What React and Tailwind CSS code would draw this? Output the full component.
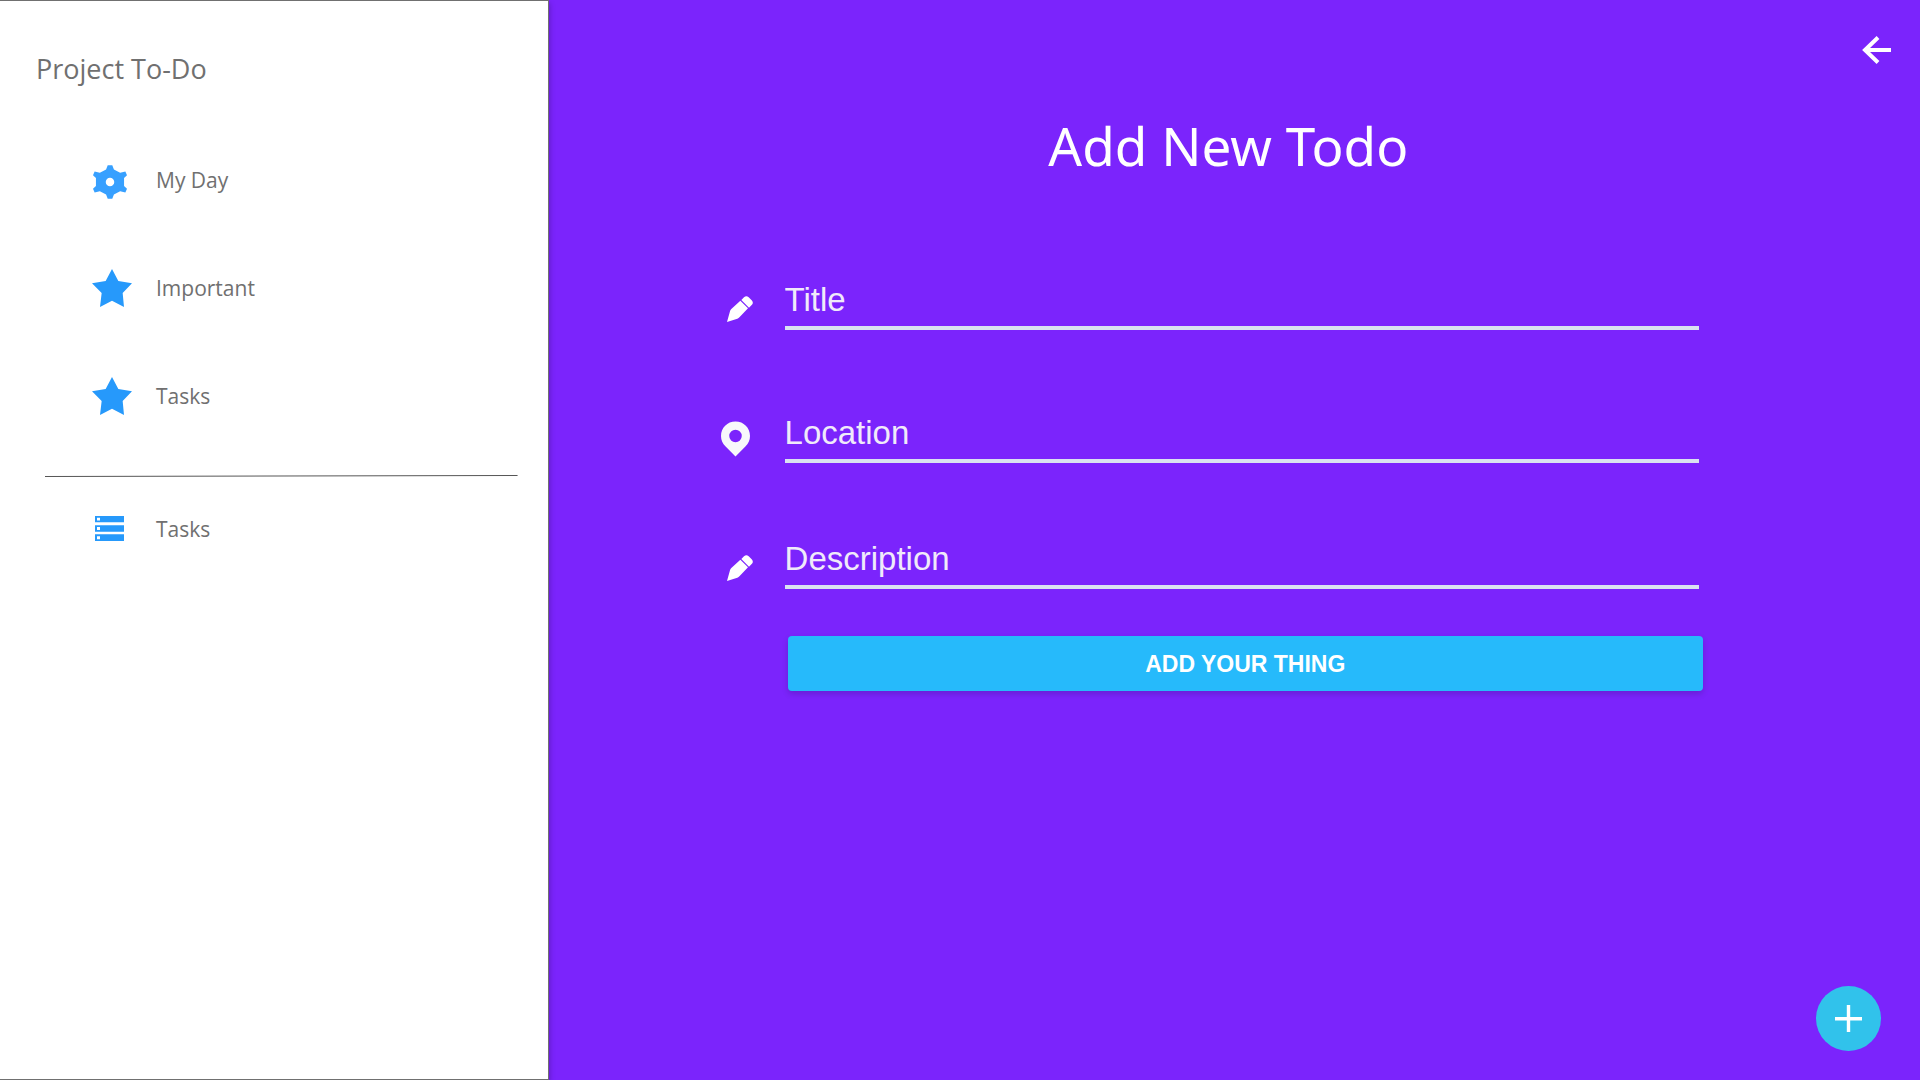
import React from "react";

const GearIcon = () => (
  <svg className="h-[34px] w-[34px]" viewBox="38 75 104 102" fill="#37a0ff" aria-hidden="true">
    <path
      fillRule="evenodd"
      d="M83 75H97L102 88L121 98L137 94L142 105L133 114V138L142 147L137 158L121 154L102 164L97 177H83L78 164L59 154L43 158L38 147L47 138V114L38 105L43 94L59 98L78 88ZM90 113A13 13 0 1 0 90 139A13 13 0 1 0 90 113Z"
    />
  </svg>
);

const StarIcon = () => (
  <svg className="h-[38px] w-10" viewBox="0 0 120 114" fill="#2699fb" aria-hidden="true">
    <path d="M60 0L79 36L120 43L92 72L96 114L60 95L24 114L29 72L0 43L41 36Z" />
  </svg>
);

const ListIcon = () => (
  <svg className="h-[26px] w-[29px]" viewBox="0 0 29 26" fill="#2699fb" aria-hidden="true">
    <path
      fillRule="evenodd"
      d="M0 0H29V6.3H0ZM2 1.7V4.6H5V1.7ZM0 9.2H29V15.8H0ZM2 11V14H5V11ZM0 18.3H29V25H0ZM2 20.2V23.2H5V20.2Z"
    />
  </svg>
);

const PencilIcon = () => (
  <svg className="h-[26px] w-[26px]" viewBox="0 0 78 78" fill="#fff" aria-hidden="true">
    <path d="M0 78L9 46Q10 42 13 39L40 14L63 37L38 63Q35 66 31 68ZM43 12L51 4Q58 -3 65 4L74 13Q81 20 74 27L66 35Z" />
  </svg>
);

const PinIcon = () => (
  <svg className="h-9 w-[29px]" viewBox="0 0 88 106" fill="#f8f8fb" aria-hidden="true">
    <path
      fillRule="evenodd"
      d="M44 0C19 0 0 19 0 44C0 57 5 67 14 76L44 106L74 76C83 67 88 57 88 44C88 19 69 0 44 0ZM44 25A19 19 0 1 1 44 63A19 19 0 1 1 44 25Z"
    />
  </svg>
);

const NavItem = ({ icon, label }) => (
  <li>
    <a href="#" className="flex h-9 items-center text-[21px] leading-9">
      <span className="flex w-16 shrink-0 items-center">{icon}</span>
      {label}
    </a>
  </li>
);

const Field = ({ id, label, icon }) => (
  <div className="flex items-end">
    <label htmlFor={id} aria-label={label} className="flex w-16 shrink-0">
      {icon}
    </label>
    <input
      id={id}
      type="text"
      placeholder={label}
      className="mr-1 h-[58px] min-w-0 flex-1 border-b-4 border-[#d9e2f0] bg-transparent pt-0.5 font-['Liberation_Sans',sans-serif] text-[33px] leading-10 text-[#f0eafa] outline-none placeholder:text-[#f0eafa] placeholder:opacity-100"
    />
  </div>
);

export default function App() {
  return (
    <div className="flex min-h-screen bg-[#7b24fc] font-['Open_Sans',sans-serif]">
      <aside className="w-2/7 shrink-0 border-y border-r border-[#707070] bg-white text-[#707070] shadow-[0_3px_6px_rgba(0,0,0,0.3)]">
        <h2 className="pt-12 pl-9 text-[27px] leading-10">Project To-Do</h2>
        <nav>
          <ul className="flex flex-col gap-[72px] pt-[73px] pl-[92px]">
            <NavItem icon={<span className="pt-[3px] pl-px"><GearIcon /></span>} label="My Day" />
            <NavItem icon={<StarIcon />} label="Important" />
            <NavItem icon={<StarIcon />} label="Tasks" />
          </ul>
          <svg
            className="mt-[61px] ml-[45px] h-[2px] w-[calc(100%-75px)]"
            viewBox="0 0 473 2"
            preserveAspectRatio="none"
            aria-hidden="true"
          >
            <line x1="0" y1="1.5" x2="473" y2="0.5" stroke="#555" />
          </svg>
          <ul className="pt-[34px] pl-[92px]">
            <NavItem icon={<span className="pl-[3px]"><ListIcon /></span>} label="Tasks" />
          </ul>
        </nav>
      </aside>

      <main className="flex min-w-0 flex-1 flex-col">
        <header className="flex justify-end pt-9 pr-7">
          <button type="button" aria-label="Go back">
            <svg className="h-7 w-[30px]" viewBox="0 0 30 28" fill="none" stroke="#fff" strokeWidth="4" aria-hidden="true">
              <path d="M29 14H3M16 1.5L3 14L16 26.5" />
            </svg>
          </button>
        </header>
        <h1 className="pt-[46px] pr-3 text-center font-['Noto_Sans',sans-serif] text-[53px] leading-[72px] text-white">
          Add New Todo
        </h1>
        <form className="pt-[90px] pr-[217px] pl-[172px]" onSubmit={(e) => e.preventDefault()}>
          <div className="flex flex-col">
            <Field id="title" label="Title" icon={<span className="pb-2 pl-[6px]"><PencilIcon /></span>} />
            <div className="pt-[75px] pb-[68px]">
              <Field id="location" label="Location" icon={<span className="pb-1.5"><PinIcon /></span>} />
            </div>
            <Field id="description" label="Description" icon={<span className="pb-2 pl-[6px]"><PencilIcon /></span>} />
          </div>
          <div className="pt-[47px] pl-[67px]">
            <button
              type="submit"
              className="h-[55px] w-full rounded bg-[#26bafb] font-['Liberation_Sans',sans-serif] text-[23px] leading-8 font-bold text-white shadow-[0_3px_6px_rgba(0,0,0,0.16)]"
            >
              ADD YOUR THING
            </button>
          </div>
        </form>
        <footer className="mt-auto flex justify-end pr-[39px] pb-[29px]">
          <button
            type="button"
            aria-label="Add a todo"
            className="flex h-[65px] w-[65px] items-center justify-center rounded-full bg-[#31c2eb]"
          >
            <svg className="h-[27px] w-[27px]" viewBox="0 0 27 27" stroke="#fff" strokeWidth="3.4" aria-hidden="true">
              <path d="M13.5 0V27M0 13.8H27" />
            </svg>
          </button>
        </footer>
      </main>
    </div>
  );
}
